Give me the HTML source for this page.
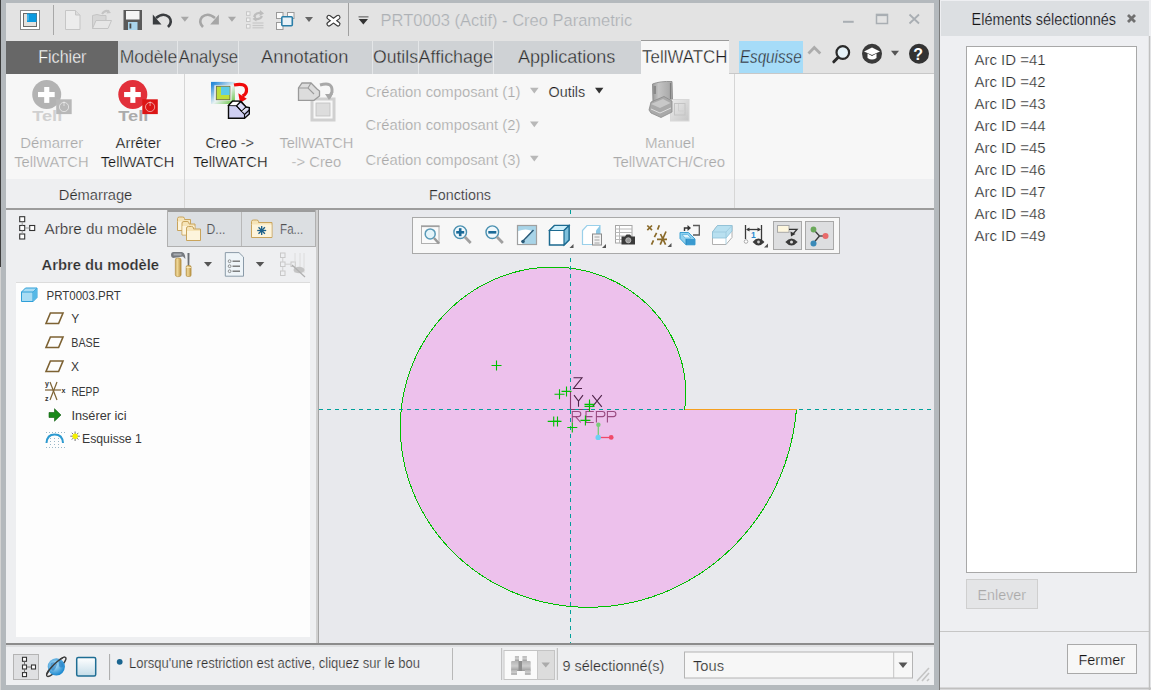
<!DOCTYPE html><html><head><meta charset="utf-8"><style>html,body{margin:0;padding:0;overflow:hidden;background:#b4b9bd}svg{display:block;font-family:"Liberation Sans",sans-serif}</style></head><body><svg width="1151" height="690" viewBox="0 0 1151 690"><rect x="0" y="0" width="1151" height="690" fill="#b4b9bd" />
<rect x="0" y="0" width="1" height="267" fill="#3c3c3c" />
<rect x="0" y="267" width="1" height="423" fill="#d2d2d2" />
<rect x="6" y="3" width="928" height="38" fill="#e3e3e3" />
<rect x="6" y="41" width="928" height="33" fill="#cfd2d5" />
<rect x="6" y="41" width="112" height="33" fill="#676767" />
<line x1="177.5" y1="41" x2="177.5" y2="74" stroke="#e4e6e8" stroke-width="1" />
<line x1="238.5" y1="41" x2="238.5" y2="74" stroke="#e4e6e8" stroke-width="1" />
<line x1="372.5" y1="41" x2="372.5" y2="74" stroke="#e4e6e8" stroke-width="1" />
<line x1="418.5" y1="41" x2="418.5" y2="74" stroke="#e4e6e8" stroke-width="1" />
<line x1="493.5" y1="41" x2="493.5" y2="74" stroke="#e4e6e8" stroke-width="1" />
<rect x="729" y="41" width="205" height="33" fill="#e3e3e3" />
<rect x="739" y="41" width="64" height="32" fill="#a6dcf8" />
<line x1="729" y1="73.5" x2="934" y2="73.5" stroke="#c8c8c8" stroke-width="1" />
<rect x="641" y="40" width="88" height="35" fill="#f7f7f7" />
<line x1="641" y1="40.5" x2="729" y2="40.5" stroke="#9a9a9a" stroke-width="1" />
<rect x="6" y="74" width="928" height="105" fill="#f7f7f7" />
<rect x="6" y="179" width="928" height="29" fill="#eeeff1" />
<line x1="184.5" y1="74" x2="184.5" y2="208" stroke="#d6d6d6" stroke-width="1" />
<line x1="734.5" y1="74" x2="734.5" y2="208" stroke="#d6d6d6" stroke-width="1" />
<rect x="6" y="208" width="928" height="2" fill="#9c9c9c" />
<rect x="6" y="210" width="312" height="433" fill="#eeeff1" />
<rect x="167" y="210" width="150" height="37" fill="#dcdfe2" />
<rect x="167" y="210" width="150" height="2" fill="#9c9c9c" />
<line x1="167.5" y1="210" x2="167.5" y2="247" stroke="#b0b0b0" stroke-width="1" />
<line x1="241.5" y1="212" x2="241.5" y2="247" stroke="#b8b8b8" stroke-width="1" />
<line x1="315.5" y1="210" x2="315.5" y2="247" stroke="#b0b0b0" stroke-width="1" />
<line x1="167" y1="246.5" x2="316" y2="246.5" stroke="#b0b0b0" stroke-width="1" />
<rect x="16" y="282" width="294" height="355" fill="#fdfdfd" />
<line x1="16" y1="282.5" x2="310" y2="282.5" stroke="#dcdcdc" stroke-width="1" />
<rect x="316" y="210" width="2" height="433" fill="#d0d0d0" />
<rect x="318" y="210" width="1" height="433" fill="#a4a4a4" />
<rect x="319" y="210" width="615" height="433" fill="#e8e9ed" />
<rect x="6" y="643" width="928" height="2" fill="#8c8c8c" />
<rect x="6" y="645" width="928" height="40" fill="#eeeff1" />
<rect x="6" y="645" width="928" height="2" fill="#dedfe1" />
<rect x="939" y="0" width="1" height="690" fill="#7c7c7c" />
<rect x="940" y="0" width="211" height="690" fill="#eeeff2" />
<rect x="941" y="1" width="208" height="35" fill="#dcdfe2" />
<rect x="966.5" y="46.5" width="170" height="526" fill="#ffffff" stroke="#a8a8a8" stroke-width="1"/>
<path d="M684.6,409.3 L684.88,406.99 L685.11,404.97 L685.30,402.94 L685.46,400.90 L685.58,398.86 L685.67,396.81 L685.72,394.75 L685.73,392.69 L685.71,390.62 L685.65,388.55 L685.55,386.48 L685.42,384.40 L685.24,382.32 L685.04,380.23 L684.79,378.15 L684.51,376.07 L684.19,373.99 L683.83,371.90 L683.43,369.82 L683.00,367.75 L682.53,365.67 L682.02,363.60 L681.47,361.54 L680.89,359.48 L680.26,357.42 L679.60,355.37 L678.90,353.33 L678.17,351.30 L677.39,349.27 L676.58,347.26 L675.73,345.25 L674.84,343.26 L673.92,341.28 L672.96,339.30 L671.96,337.35 L670.93,335.40 L669.86,333.47 L668.75,331.56 L667.60,329.66 L666.42,327.77 L665.21,325.91 L663.95,324.06 L662.67,322.23 L661.34,320.41 L659.98,318.62 L658.59,316.85 L657.16,315.10 L655.70,313.37 L654.21,311.66 L652.68,309.98 L651.12,308.32 L649.53,306.68 L647.90,305.07 L646.24,303.48 L644.55,301.92 L642.83,300.39 L641.08,298.88 L639.30,297.40 L637.48,295.95 L635.64,294.53 L633.77,293.14 L631.87,291.78 L629.95,290.45 L627.99,289.15 L626.01,287.89 L624.00,286.65 L621.97,285.45 L619.91,284.29 L617.82,283.15 L615.72,282.05 L613.58,280.99 L611.43,279.96 L609.25,278.97 L607.05,278.02 L604.83,277.10 L602.59,276.22 L600.32,275.38 L598.04,274.57 L595.74,273.81 L593.42,273.08 L591.08,272.40 L588.73,271.75 L586.36,271.15 L583.98,270.58 L581.58,270.06 L579.16,269.58 L576.74,269.13 L574.30,268.74 L571.85,268.38 L569.38,268.07 L566.91,267.80 L564.43,267.57 L561.94,267.39 L559.44,267.25 L556.93,267.15 L554.42,267.10 L551.90,267.09 L549.37,267.13 L546.84,267.22 L544.31,267.34 L541.78,267.52 L539.24,267.73 L536.70,268.00 L534.16,268.31 L531.63,268.66 L529.09,269.06 L526.56,269.51 L524.03,270.00 L521.50,270.53 L518.98,271.12 L516.46,271.75 L513.95,272.42 L511.45,273.14 L508.95,273.91 L506.47,274.72 L503.99,275.58 L501.53,276.48 L499.07,277.43 L496.63,278.42 L494.20,279.46 L491.78,280.54 L489.38,281.67 L487.00,282.84 L484.63,284.06 L482.28,285.32 L479.94,286.63 L477.63,287.98 L475.33,289.37 L473.06,290.81 L470.80,292.29 L468.57,293.81 L466.36,295.37 L464.17,296.98 L462.01,298.62 L459.88,300.31 L457.77,302.04 L455.68,303.81 L453.63,305.62 L451.60,307.47 L449.60,309.36 L447.63,311.29 L445.70,313.26 L443.79,315.26 L441.92,317.30 L440.07,319.38 L438.27,321.50 L436.49,323.65 L434.75,325.84 L433.05,328.06 L431.38,330.31 L429.75,332.60 L428.16,334.92 L426.60,337.27 L425.09,339.66 L423.61,342.08 L422.18,344.52 L420.78,347.00 L419.43,349.51 L418.12,352.04 L416.85,354.60 L415.62,357.19 L414.44,359.81 L413.30,362.45 L412.21,365.11 L411.16,367.80 L410.16,370.51 L409.20,373.25 L408.29,376.01 L407.43,378.78 L406.61,381.58 L405.85,384.40 L405.13,387.23 L404.46,390.09 L403.84,392.96 L403.27,395.84 L402.75,398.74 L402.28,401.66 L401.86,404.58 L401.49,407.53 L401.18,410.48 L400.91,413.44 L400.70,416.41 L400.54,419.39 L400.43,422.38 L400.38,425.38 L400.38,428.38 L400.43,431.39 L400.53,434.40 L400.69,437.41 L400.90,440.43 L401.16,443.45 L401.48,446.47 L401.86,449.48 L402.28,452.50 L402.76,455.51 L403.30,458.52 L403.89,461.53 L404.53,464.53 L405.23,467.52 L405.98,470.51 L406.78,473.49 L407.64,476.46 L408.56,479.42 L409.52,482.36 L410.55,485.30 L411.62,488.22 L412.75,491.13 L413.93,494.02 L415.16,496.90 L416.45,499.75 L417.79,502.60 L419.18,505.42 L420.63,508.22 L422.12,511.00 L423.67,513.76 L425.27,516.49 L426.92,519.20 L428.62,521.89 L430.37,524.55 L432.17,527.19 L434.02,529.79 L435.92,532.37 L437.87,534.92 L439.86,537.44 L441.91,539.93 L444.00,542.38 L446.14,544.80 L448.32,547.19 L450.55,549.54 L452.82,551.86 L455.14,554.14 L457.51,556.38 L459.91,558.59 L462.36,560.75 L464.85,562.88 L467.38,564.96 L469.96,567.01 L472.57,569.01 L475.22,570.97 L477.92,572.88 L480.65,574.75 L483.41,576.57 L486.22,578.35 L489.05,580.08 L491.93,581.77 L494.84,583.40 L497.78,584.99 L500.75,586.53 L503.76,588.01 L506.79,589.45 L509.86,590.83 L512.96,592.17 L516.08,593.44 L519.23,594.67 L522.41,595.84 L525.61,596.96 L528.84,598.02 L532.09,599.03 L535.37,599.98 L538.66,600.88 L541.98,601.72 L545.31,602.50 L548.67,603.22 L552.04,603.89 L555.43,604.49 L558.84,605.04 L562.26,605.53 L565.69,605.96 L569.14,606.32 L572.59,606.63 L576.06,606.88 L579.54,607.07 L583.03,607.19 L586.52,607.25 L590.02,607.26 L593.52,607.20 L597.03,607.07 L600.54,606.89 L604.06,606.64 L607.57,606.34 L611.09,605.96 L614.60,605.53 L618.11,605.03 L621.61,604.47 L625.12,603.85 L628.61,603.17 L632.10,602.42 L635.58,601.61 L639.05,600.74 L642.51,599.80 L645.96,598.80 L649.39,597.74 L652.81,596.62 L656.22,595.44 L659.61,594.19 L662.98,592.88 L666.34,591.51 L669.67,590.08 L672.99,588.59 L676.28,587.04 L679.55,585.43 L682.80,583.75 L686.02,582.02 L689.22,580.23 L692.38,578.38 L695.52,576.47 L698.63,574.50 L701.71,572.48 L704.76,570.40 L707.78,568.26 L710.76,566.07 L713.71,563.81 L716.62,561.51 L719.49,559.15 L722.33,556.74 L725.13,554.27 L727.89,551.75 L730.61,549.18 L733.28,546.55 L735.92,543.88 L738.51,541.15 L741.05,538.38 L743.55,535.56 L746.00,532.69 L748.41,529.77 L750.77,526.80 L753.07,523.79 L755.33,520.74 L757.54,517.64 L759.69,514.50 L761.80,511.32 L763.85,508.09 L765.84,504.82 L767.78,501.52 L769.66,498.18 L771.49,494.79 L773.26,491.38 L774.97,487.92 L776.63,484.43 L778.22,480.91 L779.76,477.36 L781.23,473.77 L782.64,470.15 L783.99,466.51 L785.28,462.83 L786.50,459.13 L787.66,455.40 L788.76,451.64 L789.79,447.86 L790.75,444.06 L791.65,440.24 L792.49,436.39 L793.25,432.53 L793.95,428.65 L794.58,424.75 L795.15,420.83 L795.64,416.90 L796.07,412.96 L796.5,409.3 Z" fill="#edc1ec"/>
<path d="M684.6,409.3 L684.88,406.99 L685.11,404.97 L685.30,402.94 L685.46,400.90 L685.58,398.86 L685.67,396.81 L685.72,394.75 L685.73,392.69 L685.71,390.62 L685.65,388.55 L685.55,386.48 L685.42,384.40 L685.24,382.32 L685.04,380.23 L684.79,378.15 L684.51,376.07 L684.19,373.99 L683.83,371.90 L683.43,369.82 L683.00,367.75 L682.53,365.67 L682.02,363.60 L681.47,361.54 L680.89,359.48 L680.26,357.42 L679.60,355.37 L678.90,353.33 L678.17,351.30 L677.39,349.27 L676.58,347.26 L675.73,345.25 L674.84,343.26 L673.92,341.28 L672.96,339.30 L671.96,337.35 L670.93,335.40 L669.86,333.47 L668.75,331.56 L667.60,329.66 L666.42,327.77 L665.21,325.91 L663.95,324.06 L662.67,322.23 L661.34,320.41 L659.98,318.62 L658.59,316.85 L657.16,315.10 L655.70,313.37 L654.21,311.66 L652.68,309.98 L651.12,308.32 L649.53,306.68 L647.90,305.07 L646.24,303.48 L644.55,301.92 L642.83,300.39 L641.08,298.88 L639.30,297.40 L637.48,295.95 L635.64,294.53 L633.77,293.14 L631.87,291.78 L629.95,290.45 L627.99,289.15 L626.01,287.89 L624.00,286.65 L621.97,285.45 L619.91,284.29 L617.82,283.15 L615.72,282.05 L613.58,280.99 L611.43,279.96 L609.25,278.97 L607.05,278.02 L604.83,277.10 L602.59,276.22 L600.32,275.38 L598.04,274.57 L595.74,273.81 L593.42,273.08 L591.08,272.40 L588.73,271.75 L586.36,271.15 L583.98,270.58 L581.58,270.06 L579.16,269.58 L576.74,269.13 L574.30,268.74 L571.85,268.38 L569.38,268.07 L566.91,267.80 L564.43,267.57 L561.94,267.39 L559.44,267.25 L556.93,267.15 L554.42,267.10 L551.90,267.09 L549.37,267.13 L546.84,267.22 L544.31,267.34 L541.78,267.52 L539.24,267.73 L536.70,268.00 L534.16,268.31 L531.63,268.66 L529.09,269.06 L526.56,269.51 L524.03,270.00 L521.50,270.53 L518.98,271.12 L516.46,271.75 L513.95,272.42 L511.45,273.14 L508.95,273.91 L506.47,274.72 L503.99,275.58 L501.53,276.48 L499.07,277.43 L496.63,278.42 L494.20,279.46 L491.78,280.54 L489.38,281.67 L487.00,282.84 L484.63,284.06 L482.28,285.32 L479.94,286.63 L477.63,287.98 L475.33,289.37 L473.06,290.81 L470.80,292.29 L468.57,293.81 L466.36,295.37 L464.17,296.98 L462.01,298.62 L459.88,300.31 L457.77,302.04 L455.68,303.81 L453.63,305.62 L451.60,307.47 L449.60,309.36 L447.63,311.29 L445.70,313.26 L443.79,315.26 L441.92,317.30 L440.07,319.38 L438.27,321.50 L436.49,323.65 L434.75,325.84 L433.05,328.06 L431.38,330.31 L429.75,332.60 L428.16,334.92 L426.60,337.27 L425.09,339.66 L423.61,342.08 L422.18,344.52 L420.78,347.00 L419.43,349.51 L418.12,352.04 L416.85,354.60 L415.62,357.19 L414.44,359.81 L413.30,362.45 L412.21,365.11 L411.16,367.80 L410.16,370.51 L409.20,373.25 L408.29,376.01 L407.43,378.78 L406.61,381.58 L405.85,384.40 L405.13,387.23 L404.46,390.09 L403.84,392.96 L403.27,395.84 L402.75,398.74 L402.28,401.66 L401.86,404.58 L401.49,407.53 L401.18,410.48 L400.91,413.44 L400.70,416.41 L400.54,419.39 L400.43,422.38 L400.38,425.38 L400.38,428.38 L400.43,431.39 L400.53,434.40 L400.69,437.41 L400.90,440.43 L401.16,443.45 L401.48,446.47 L401.86,449.48 L402.28,452.50 L402.76,455.51 L403.30,458.52 L403.89,461.53 L404.53,464.53 L405.23,467.52 L405.98,470.51 L406.78,473.49 L407.64,476.46 L408.56,479.42 L409.52,482.36 L410.55,485.30 L411.62,488.22 L412.75,491.13 L413.93,494.02 L415.16,496.90 L416.45,499.75 L417.79,502.60 L419.18,505.42 L420.63,508.22 L422.12,511.00 L423.67,513.76 L425.27,516.49 L426.92,519.20 L428.62,521.89 L430.37,524.55 L432.17,527.19 L434.02,529.79 L435.92,532.37 L437.87,534.92 L439.86,537.44 L441.91,539.93 L444.00,542.38 L446.14,544.80 L448.32,547.19 L450.55,549.54 L452.82,551.86 L455.14,554.14 L457.51,556.38 L459.91,558.59 L462.36,560.75 L464.85,562.88 L467.38,564.96 L469.96,567.01 L472.57,569.01 L475.22,570.97 L477.92,572.88 L480.65,574.75 L483.41,576.57 L486.22,578.35 L489.05,580.08 L491.93,581.77 L494.84,583.40 L497.78,584.99 L500.75,586.53 L503.76,588.01 L506.79,589.45 L509.86,590.83 L512.96,592.17 L516.08,593.44 L519.23,594.67 L522.41,595.84 L525.61,596.96 L528.84,598.02 L532.09,599.03 L535.37,599.98 L538.66,600.88 L541.98,601.72 L545.31,602.50 L548.67,603.22 L552.04,603.89 L555.43,604.49 L558.84,605.04 L562.26,605.53 L565.69,605.96 L569.14,606.32 L572.59,606.63 L576.06,606.88 L579.54,607.07 L583.03,607.19 L586.52,607.25 L590.02,607.26 L593.52,607.20 L597.03,607.07 L600.54,606.89 L604.06,606.64 L607.57,606.34 L611.09,605.96 L614.60,605.53 L618.11,605.03 L621.61,604.47 L625.12,603.85 L628.61,603.17 L632.10,602.42 L635.58,601.61 L639.05,600.74 L642.51,599.80 L645.96,598.80 L649.39,597.74 L652.81,596.62 L656.22,595.44 L659.61,594.19 L662.98,592.88 L666.34,591.51 L669.67,590.08 L672.99,588.59 L676.28,587.04 L679.55,585.43 L682.80,583.75 L686.02,582.02 L689.22,580.23 L692.38,578.38 L695.52,576.47 L698.63,574.50 L701.71,572.48 L704.76,570.40 L707.78,568.26 L710.76,566.07 L713.71,563.81 L716.62,561.51 L719.49,559.15 L722.33,556.74 L725.13,554.27 L727.89,551.75 L730.61,549.18 L733.28,546.55 L735.92,543.88 L738.51,541.15 L741.05,538.38 L743.55,535.56 L746.00,532.69 L748.41,529.77 L750.77,526.80 L753.07,523.79 L755.33,520.74 L757.54,517.64 L759.69,514.50 L761.80,511.32 L763.85,508.09 L765.84,504.82 L767.78,501.52 L769.66,498.18 L771.49,494.79 L773.26,491.38 L774.97,487.92 L776.63,484.43 L778.22,480.91 L779.76,477.36 L781.23,473.77 L782.64,470.15 L783.99,466.51 L785.28,462.83 L786.50,459.13 L787.66,455.40 L788.76,451.64 L789.79,447.86 L790.75,444.06 L791.65,440.24 L792.49,436.39 L793.25,432.53 L793.95,428.65 L794.58,424.75 L795.15,420.83 L795.64,416.90 L796.07,412.96 L796.5,409.3 Z" fill="none" stroke="#00c000" stroke-width="1" shape-rendering="crispEdges"/>
<rect x="20.5" y="10.5" width="19" height="19" fill="#ffffff" stroke="#8a8a8a" stroke-width="1"/>
<rect x="23.5" y="13.5" width="13" height="13" fill="#e4e2de" stroke="#6a6a6a" stroke-width="1"/>
<rect x="27" y="13.5" width="9.5" height="8.5" fill="#0a9ae0" />
<line x1="28" y1="14.5" x2="28" y2="20.5" stroke="#9fd8f4" stroke-width="0.8" />
<line x1="53.5" y1="5" x2="53.5" y2="35" stroke="#a8a8a8" stroke-width="1" />
<path d="M65.5,10.5 L75.5,10.5 L80,15 L80,29.5 L65.5,29.5 Z" fill="#ececec" stroke="#c6c6c6" stroke-width="1"/>
<path d="M75.5,10.5 L75.5,15 L80,15" fill="#dcdcdc" stroke="#c6c6c6" stroke-width="1"/>
<path d="M92.5,28.5 L92.5,15.5 L97,14.5 L101,15.5 L106,15.5 L106,20 Z" fill="#d6d6d6" stroke="#c4c4c4" stroke-width="1"/>
<path d="M92.5,28.5 L96,20.5 L111.5,20.5 L108,28.5 Z" fill="#e6e6e6" stroke="#c4c4c4" stroke-width="1"/>
<path d="M102,14 Q105,9.5 109,11.5" fill="none" stroke="#c4c4c4" stroke-width="2"/><path d="M108,9.5 L111,13 L106.5,13.5 Z" fill="#c4c4c4"/>
<rect x="123.5" y="10" width="18.5" height="20" fill="#5a5a5a" />
<rect x="126" y="11" width="13.5" height="8.5" fill="#f4f4f4" />
<rect x="128" y="22" width="9.5" height="8" fill="#a9d4ec" />
<rect x="129.5" y="23.5" width="1.8" height="5" fill="#4a4a4a" />
<path d="M156,18 Q163,12 169,17 Q173,22 168,27" fill="none" stroke="#3a3d40" stroke-width="2.6"/>
<path d="M152.8,14.5 L152.8,24.5 L161.5,24.5 Z" fill="#3a3d40"/>
<path d="M180.8,16.7 L188.9,16.7 L184.85,21.8 Z" fill="#a8a8a8"/>
<path d="M215,18 Q208,12 202,17 Q198,22 203,27" fill="none" stroke="#a6a6a6" stroke-width="2.6"/>
<path d="M218.9,14.5 L218.9,24.5 L210.2,24.5 Z" fill="#a6a6a6"/>
<path d="M227.9,16.7 L236,16.7 L231.95,21.8 Z" fill="#a8a8a8"/>
<rect x="246.5" y="11.8" width="3.5" height="3.5" fill="#f2f2f2" stroke="#c4c4c4" stroke-width="0.9"/>
<rect x="246.5" y="18" width="3.5" height="3.5" fill="#f2f2f2" stroke="#c4c4c4" stroke-width="0.9"/>
<rect x="246.5" y="24.6" width="3.5" height="3.5" fill="#f2f2f2" stroke="#c4c4c4" stroke-width="0.9"/>
<line x1="252.5" y1="23" x2="263.5" y2="23" stroke="#c8c8c8" stroke-width="1.2" />
<line x1="252.5" y1="25.5" x2="263.5" y2="25.5" stroke="#c8c8c8" stroke-width="1.2" />
<line x1="252.5" y1="27.8" x2="263.5" y2="27.8" stroke="#c8c8c8" stroke-width="1.2" />
<path d="M254,17 Q256,12 261,13" fill="none" stroke="#bdbdbd" stroke-width="2.2"/><path d="M260,10 L264,13.5 L259.5,16 Z" fill="#bdbdbd"/>
<path d="M262,16 Q260,20 255,19" fill="none" stroke="#bdbdbd" stroke-width="2.2"/><path d="M256,16 L252.5,19 L256.5,21.5 Z" fill="#bdbdbd"/>
<rect x="276.5" y="12.5" width="6.5" height="6" fill="#fafafa" stroke="#9a9a9a" stroke-width="1"/>
<rect x="287.5" y="12.5" width="6.5" height="6" fill="#fafafa" stroke="#9a9a9a" stroke-width="1"/>
<rect x="276.5" y="22.5" width="6.5" height="7" fill="#fafafa" stroke="#9a9a9a" stroke-width="1"/>
<rect x="281.8" y="16.8" width="10.5" height="9" fill="#e8f2f8" stroke="#2a7ea8" stroke-width="1.6" rx="1"/>
<path d="M305,17 L313,17 L309,22 Z" fill="#666"/>
<path d="M329,17.3 L338,24 M338,17.3 L329,24" stroke="#3a3a3a" stroke-width="5" stroke-linecap="round"/>
<path d="M329,17.3 L338,24 M338,17.3 L329,24" stroke="#ffffff" stroke-width="2.8" stroke-linecap="round"/>
<line x1="348.5" y1="3" x2="348.5" y2="36" stroke="#a0a0a0" stroke-width="1" />
<rect x="358.5" y="16" width="10" height="1.6" fill="#8a8a8a" />
<path d="M358.7,19 L368,19 L363.35,24.5 Z" fill="#333"/>
<rect x="843" y="20.8" width="10.7" height="2" fill="#a9aeb3" />
<rect x="876.5" y="14.5" width="11" height="9" fill="none" stroke="#a9aeb3" stroke-width="1.5"/>
<rect x="876" y="13.9" width="12" height="2.2" fill="#a9aeb3" />
<path d="M909.5,14.5 L919,23.5 M919,14.5 L909.5,23.5" stroke="#a9aeb3" stroke-width="1.8"/>
<path d="M808.5,53.5 L814.3,47.5 L820.3,53.5" fill="none" stroke="#acacac" stroke-width="2.8"/>
<circle cx="842.8" cy="52.5" r="6.3" fill="#e6f2f8" stroke="#2a2a2a" stroke-width="2.2"/>
<line x1="838" y1="57.5" x2="833.8" y2="61.8" stroke="#2a2a2a" stroke-width="3" stroke-linecap="round"/>
<circle cx="872" cy="53.8" r="10" fill="#3a3a3a"/>
<path d="M864,51.5 L872,47.5 L880,51.5 L872,55 Z" fill="#ffffff"/><path d="M867.5,53.5 L867.5,58 Q872,61 876.5,58 L876.5,53.5 L872,56 Z" fill="#ffffff"/>
<path d="M891,50.7 L899,50.7 L895,55.8 Z" fill="#555"/>
<circle cx="919" cy="53.8" r="10" fill="#333"/>
<text x="913.3" y="60" font-size="16" font-weight="bold" fill="#ffffff">?</text>
<text x="32.2" y="120.5" font-size="14" font-weight="bold" fill="#d0d0d0" textLength="30" lengthAdjust="spacingAndGlyphs">Tell</text>
<circle cx="46.7" cy="94.6" r="14.5" fill="#b3b3b3"/>
<rect x="38.0" y="92" width="16.7" height="5.1" fill="#ffffff" />
<rect x="44.2" y="87" width="5.1" height="15.9" fill="#ffffff" />
<rect x="56.2" y="99.3" width="15.5" height="14.8" fill="#b8b8b8" />
<circle cx="64.0" cy="107" r="4.6" fill="none" stroke="rgba(255,255,255,0.55)" stroke-width="1"/>
<line x1="64.0" y1="101.5" x2="64.0" y2="106" stroke="rgba(255,255,255,0.55)" stroke-width="1" />
<text x="118.30000000000001" y="120.5" font-size="14" font-weight="bold" fill="#ababab" textLength="30" lengthAdjust="spacingAndGlyphs">Tell</text>
<circle cx="132.8" cy="94.6" r="14.5" fill="#e2303a"/>
<rect x="124.10000000000001" y="92" width="16.7" height="5.1" fill="#ffffff" />
<rect x="130.3" y="87" width="5.1" height="15.9" fill="#ffffff" />
<rect x="142.3" y="99.3" width="15.5" height="14.8" fill="#dc1616" />
<circle cx="150.10000000000002" cy="107" r="4.6" fill="none" stroke="rgba(255,255,255,0.55)" stroke-width="1"/>
<line x1="150.10000000000002" y1="101.5" x2="150.10000000000002" y2="106" stroke="rgba(255,255,255,0.55)" stroke-width="1" />
<defs><linearGradient id="gb" x1="0" y1="0" x2="1" y2="1"><stop offset="0" stop-color="#2a8ad8"/><stop offset="0.55" stop-color="#e8f2f2"/><stop offset="1" stop-color="#70c850"/></linearGradient></defs>
<rect x="212.7" y="83.6" width="20.5" height="18.7" fill="none" stroke="url(#gb)" stroke-width="3.4"/>
<rect x="216.3" y="86.3" width="13.6" height="13.4" fill="#bede3a" stroke="#6a6a40" stroke-width="0.9"/>
<rect x="221" y="86.8" width="8.6" height="8.2" fill="#5ccce6" />
<path d="M234,85 Q245.5,82.5 246.5,89 Q247,94 242.5,96" fill="none" stroke="#f00a0a" stroke-width="3.2"/><path d="M238.3,93.2 L246.8,98.8 L240,103 Z" fill="#f00a0a"/>
<path d="M228.5,118.3 L228.5,105.5 L232.5,101.3 L238.5,101.3 L241.5,102 L246,107 L249.3,107.5 L249.3,114 L244.5,118.3 Z" fill="#cfcff2" stroke="#0a0a0a" stroke-width="1.4"/>
<path d="M228.5,105.5 L232.5,101.3 L240.5,101.3 L236.5,105.8 Z" fill="#ffffff" stroke="#0a0a0a" stroke-width="1.1"/>
<path d="M236.5,105.8 L240.7,101.8 L246,107 L241.5,111.3 Z" fill="#dcdcf8" stroke="#0a0a0a" stroke-width="1.1"/>
<path d="M236.5,105.8 L244.5,114.5 L244.5,118.3 M244.5,114.5 L249.3,110" fill="none" stroke="#0a0a0a" stroke-width="1.1"/>
<line x1="242.5" y1="111.5" x2="247.5" y2="108.3" stroke="#e8e8e8" stroke-width="1.3" />
<rect x="312" y="99" width="22" height="21" fill="none" stroke="#d0d0d0" stroke-width="3"/>
<rect x="316" y="103" width="14" height="13" fill="#dddddd" stroke="#c0c0c0" stroke-width="0.8"/>
<path d="M298.5,100.3 L298.5,88 L302,83 L311,83 L317,89 L319.5,91 L319.5,96 L314,100.3 Z" fill="#dcdcdc" stroke="#9a9a9a" stroke-width="1.3"/>
<path d="M298.5,88 L308,88 L314,94 M308,88 L311,83" fill="none" stroke="#9a9a9a" stroke-width="1.1"/>
<path d="M320,85 Q333,81 332,92 L329,98" fill="none" stroke="#a8a8a8" stroke-width="3"/><path d="M325,94 L329,100 L333,94 Z" fill="#a8a8a8"/>
<defs><linearGradient id="mg" x1="0" y1="0" x2="1" y2="1"><stop offset="0" stop-color="#ececec"/><stop offset="1" stop-color="#c6c6c6"/></linearGradient><linearGradient id="bk" x1="0" y1="0" x2="1" y2="0"><stop offset="0" stop-color="#9a9a9a"/><stop offset="0.3" stop-color="#c4c4c4"/><stop offset="1" stop-color="#a4a4a4"/></linearGradient></defs>
<rect x="670.5" y="99.5" width="18.5" height="21.5" fill="url(#mg)" stroke="#d8d8d8" stroke-width="1"/>
<rect x="674.5" y="103.5" width="10.5" height="11.5" fill="none" stroke="#c4c4c4" stroke-width="1"/>
<line x1="678.5" y1="104" x2="678.5" y2="111" stroke="#cfcfcf" stroke-width="1" />
<line x1="678.5" y1="111" x2="685" y2="111" stroke="#cfcfcf" stroke-width="1" />
<path d="M652.5,84 Q660,81 672,81.5 L672.5,99 Q662,98 653,103 Z" fill="url(#bk)" stroke="#8e8e8e" stroke-width="0.9"/>
<rect x="653.5" y="86" width="2.5" height="8" fill="#8a8a8a" />
<line x1="670.5" y1="83" x2="670.5" y2="99" stroke="#7e7e7e" stroke-width="1.2" />
<path d="M649,110 L651,102 L664,96.5 L672,101 L672,112 L661,117.5 L651,113 Z" fill="#a9a9a9" stroke="#8a8a8a" stroke-width="0.8"/>
<path d="M651,104 L663,99 L670.5,103 L660,108 Z" fill="#c8c8c8"/>
<path d="M651,109 L660,113 L671,108" fill="none" stroke="#dedede" stroke-width="1"/>
<rect x="19.7" y="216.7" width="5" height="5" fill="#ffffff" stroke="#333" stroke-width="1.1"/>
<rect x="19.7" y="225.5" width="5" height="5" fill="#ffffff" stroke="#333" stroke-width="1.1"/>
<rect x="19.7" y="234" width="5" height="5" fill="#ffffff" stroke="#333" stroke-width="1.1"/>
<rect x="29.7" y="225.5" width="5" height="5" fill="#ffffff" stroke="#333" stroke-width="1.1"/>
<line x1="22.2" y1="221.7" x2="22.2" y2="225.5" stroke="#999" stroke-width="1" />
<line x1="22.2" y1="230.5" x2="22.2" y2="234" stroke="#999" stroke-width="1" />
<line x1="24.7" y1="228" x2="29.7" y2="228" stroke="#999" stroke-width="1" />
<path d="M177.5,221.5 L177.5,218.5 Q177.5,217.0 179.5,217.0 L182.5,217.0 Q184.5,217.0 184.5,218.5 L184.5,219.5 L190.5,219.5 L190.5,230.5 L177.5,230.5 Z" fill="#f6e4b8" stroke="#c9a45c" stroke-width="1"/>
<rect x="178.0" y="221.5" width="12" height="8.5" fill="#fdf4dc"/>
<path d="M182,226 L182,223 Q182,221.5 184,221.5 L187,221.5 Q189,221.5 189,223 L189,224 L195,224 L195,235 L182,235 Z" fill="#f6e4b8" stroke="#c9a45c" stroke-width="1"/>
<rect x="182.5" y="226" width="12" height="8.5" fill="#fdf4dc"/>
<path d="M186.5,231 L186.5,228 Q186.5,226.5 188.5,226.5 L191.5,226.5 Q193.5,226.5 193.5,228 L193.5,229 L200.5,229 L200.5,240.5 L186.5,240.5 Z" fill="#f6e4b8" stroke="#c9a45c" stroke-width="1"/>
<rect x="187.0" y="231" width="13" height="9.0" fill="#fdf4dc"/>
<path d="M251.5,224.5 L251.5,221.5 Q251.5,220.0 253.5,220.0 L256.5,220.0 Q258.5,220.0 258.5,221.5 L258.5,222.5 L272.0,222.5 L272.0,237.5 L251.5,237.5 Z" fill="#f6e4b8" stroke="#c9a45c" stroke-width="1"/>
<rect x="252.0" y="224.5" width="19.5" height="12.5" fill="#fdf4dc"/>
<g stroke="#1a5f8a" stroke-width="1.3"><line x1="261.7" y1="226" x2="261.7" y2="235"/><line x1="257.2" y1="230.5" x2="266.2" y2="230.5"/><line x1="258.5" y1="227.3" x2="264.9" y2="233.7"/><line x1="264.9" y1="227.3" x2="258.5" y2="233.7"/></g><circle cx="261.7" cy="230.5" r="1.8" fill="#1a5f8a"/>
<text x="206.5" y="233.9" font-size="15" fill="#505050" textLength="18.9" lengthAdjust="spacingAndGlyphs" stroke="#dcdfe2" stroke-width="0.22" >D...</text>
<text x="280.1" y="233.9" font-size="15" fill="#505050" textLength="23.1" lengthAdjust="spacingAndGlyphs" stroke="#dcdfe2" stroke-width="0.22" >Fa...</text>
<defs><linearGradient id="hd" x1="0" y1="0" x2="1" y2="0"><stop offset="0" stop-color="#c8a860"/><stop offset="0.35" stop-color="#f0d898"/><stop offset="1" stop-color="#b89040"/></linearGradient></defs>
<rect x="175.3" y="258" width="5.8" height="18.6" rx="2" fill="url(#hd)" stroke="#b08a3a" stroke-width="0.6"/>
<path d="M171,255 Q171,252 173.5,252 L182,252 Q185.5,253 185.3,259 L183,256.5 L178,257.2 L173,258 Q171,257.5 171,255 Z" fill="#767a80"/>
<rect x="173.5" y="253.5" width="8" height="2" fill="#a8acb2" />
<path d="M187.5,253 L189.5,253 L189.3,266 L187.7,266 Z" fill="#6a6e74"/>
<rect x="186.1" y="265.5" width="5" height="11" rx="1.5" fill="url(#hd)" stroke="#b08a3a" stroke-width="0.6"/>
<line x1="186.3" y1="267.5" x2="191" y2="267.5" stroke="#fff0c8" stroke-width="0.8" />
<path d="M204,261.9 L212,261.9 L208,266.7 Z" fill="#555"/>
<path d="M225.3,252.6 L239,252.6 L243.5,257 L243.5,276.2 L225.3,276.2 Z" fill="#eef4f8" stroke="#8a9aa8" stroke-width="1"/>
<circle cx="229.6" cy="261.2" r="1.4" fill="none" stroke="#777" stroke-width="0.8"/>
<line x1="232.5" y1="261.2" x2="240" y2="261.2" stroke="#6a6a6a" stroke-width="1.3" />
<circle cx="229.6" cy="266.2" r="1.4" fill="none" stroke="#777" stroke-width="0.8"/>
<line x1="232.5" y1="266.2" x2="240" y2="266.2" stroke="#6a6a6a" stroke-width="1.3" />
<circle cx="229.6" cy="271.2" r="1.4" fill="none" stroke="#777" stroke-width="0.8"/>
<line x1="232.5" y1="271.2" x2="240" y2="271.2" stroke="#6a6a6a" stroke-width="1.3" />
<path d="M255.8,261.9 L264.3,261.9 L260.05,266.7 Z" fill="#555"/>
<rect x="280.5" y="253" width="4.5" height="4.5" fill="none" stroke="#c8c8c8" stroke-width="1"/>
<rect x="280.5" y="262" width="4.5" height="4.5" fill="none" stroke="#c8c8c8" stroke-width="1"/>
<rect x="280.5" y="271" width="4.5" height="4.5" fill="none" stroke="#c8c8c8" stroke-width="1"/>
<rect x="291" y="262" width="4.5" height="4.5" fill="none" stroke="#c8c8c8" stroke-width="1"/>
<line x1="282.75" y1="257.5" x2="282.75" y2="262" stroke="#cfcfcf" stroke-width="1" />
<line x1="282.75" y1="266.5" x2="282.75" y2="271" stroke="#cfcfcf" stroke-width="1" />
<line x1="285" y1="264.2" x2="291" y2="264.2" stroke="#cfcfcf" stroke-width="1" />
<line x1="295" y1="253" x2="295" y2="273" stroke="#dcdcdc" stroke-width="1" />
<line x1="300" y1="253" x2="300" y2="273" stroke="#dcdcdc" stroke-width="1" />
<line x1="304" y1="253" x2="304" y2="273" stroke="#dcdcdc" stroke-width="1" />
<ellipse cx="299" cy="270" rx="5.5" ry="3.2" fill="#c4c4c4"/>
<line x1="292" y1="265" x2="305" y2="277" stroke="#b0b0b0" stroke-width="1.2" />
<path d="M21.5,292 L25.5,288 L37,288 L37,297.5 L33,301.5 L21.5,301.5 Z" fill="#a8dcf4" stroke="#2f9fd8" stroke-width="1"/>
<path d="M21.5,292 L33,292 L37,288 M33,292 L33,301.5" fill="none" stroke="#2f9fd8" stroke-width="1"/>
<path d="M33,292 L37,288 L37,297.5 L33,301.5 Z" fill="#56b8e6"/>
<text x="46.5" y="299.7" font-size="12" fill="#383838" textLength="74.4" lengthAdjust="spacingAndGlyphs" >PRT0003.PRT</text>
<path d="M46,323.5 L58.6,323.5 L63,313.0 L50.4,313.0 Z" fill="none" stroke="#7d6233" stroke-width="1.6"/>
<path d="M46,347.5 L58.6,347.5 L63,337.0 L50.4,337.0 Z" fill="none" stroke="#7d6233" stroke-width="1.6"/>
<path d="M46,371.5 L58.6,371.5 L63,361.0 L50.4,361.0 Z" fill="none" stroke="#7d6233" stroke-width="1.6"/>
<text x="71.3" y="323.4" font-size="12" fill="#383838" textLength="8" lengthAdjust="spacingAndGlyphs" >Y</text>
<text x="71.3" y="347.4" font-size="12" fill="#383838" textLength="28.5" lengthAdjust="spacingAndGlyphs" >BASE</text>
<text x="71" y="371.4" font-size="12" fill="#383838" textLength="8" lengthAdjust="spacingAndGlyphs" >X</text>
<g stroke="#7d6233" stroke-width="1.2"><line x1="45" y1="390" x2="61" y2="390"/><line x1="50" y1="382" x2="57" y2="400"/><line x1="57" y1="382" x2="50" y2="400"/></g>
<g font-size="7" fill="#333" font-weight="bold"><text x="45" y="386">y</text><text x="45" y="401">z</text><text x="61.5" y="393">x</text></g>
<text x="71.4" y="395.5" font-size="12" fill="#383838" textLength="27.8" lengthAdjust="spacingAndGlyphs" >REPP</text>
<path d="M49,412.5 L54.5,412.5 L54.5,408.7 L61,415 L54.5,421.2 L54.5,417.5 L49,417.5 Z" fill="#1a8a1a" stroke="#0d5a0d" stroke-width="0.6"/>
<text x="71.4" y="419.7" font-size="12" fill="#383838" textLength="55.1" lengthAdjust="spacingAndGlyphs" >Insérer ici</text>
<path d="M46.5,443 Q47,434.5 54.7,434.5 Q62.5,434.5 63,443" fill="none" stroke="#2d9ad0" stroke-width="2"/>
<g fill="#9ab8c8"><rect x="46" y="432" width="1" height="1"/><rect x="46" y="447" width="1" height="1"/><rect x="49" y="432" width="1" height="1"/><rect x="49" y="447" width="1" height="1"/><rect x="52" y="432" width="1" height="1"/><rect x="52" y="447" width="1" height="1"/><rect x="55" y="432" width="1" height="1"/><rect x="55" y="447" width="1" height="1"/><rect x="58" y="432" width="1" height="1"/><rect x="58" y="447" width="1" height="1"/><rect x="61" y="432" width="1" height="1"/><rect x="61" y="447" width="1" height="1"/><rect x="64" y="432" width="1" height="1"/><rect x="64" y="447" width="1" height="1"/><rect x="50" y="438" width="1" height="1"/><rect x="50" y="441" width="1" height="1"/><rect x="50" y="444" width="1" height="1"/><rect x="54" y="438" width="1" height="1"/><rect x="54" y="441" width="1" height="1"/><rect x="54" y="444" width="1" height="1"/><rect x="58" y="438" width="1" height="1"/><rect x="58" y="441" width="1" height="1"/><rect x="58" y="444" width="1" height="1"/></g>
<g stroke="#3a3a3a" stroke-width="0.7"><line x1="75.1" y1="431.5" x2="75.1" y2="441"/><line x1="70.3" y1="436.2" x2="79.9" y2="436.2"/><line x1="71.8" y1="432.8" x2="78.4" y2="439.6"/><line x1="78.4" y1="432.8" x2="71.8" y2="439.6"/></g><circle cx="75.1" cy="436.2" r="2.7" fill="#f4f000"/>
<text x="82" y="443.2" font-size="12" fill="#383838" textLength="59.9" lengthAdjust="spacingAndGlyphs" >Esquisse 1</text>
<line x1="319" y1="409.5" x2="934" y2="409.5" stroke="#00a09a" stroke-width="1" stroke-dasharray="4 4" shape-rendering="crispEdges"/>
<line x1="570.5" y1="210" x2="570.5" y2="643" stroke="#00a09a" stroke-width="1" stroke-dasharray="4 4" shape-rendering="crispEdges"/>
<line x1="685" y1="409.5" x2="796.5" y2="409.5" stroke="#f5a020" stroke-width="1" shape-rendering="crispEdges"/>
<path d="M570.5,391.5 L570.5,409.5 L589.5,409.5" fill="none" stroke="#8a3a70" stroke-width="1.1"/>
<path d="M573.5,377.8 L582,377.8 L573.5,388.5 L582,388.5" fill="none" stroke="#4e2448" stroke-width="1.1"/>
<path d="M574,395.2 L578.5,401 L583,395.2 M578.5,401 L578.5,406.8" fill="none" stroke="#4e2448" stroke-width="1.1"/>
<path d="M592.3,395.2 L601.8,406.8 M601.8,395.2 L592.3,406.8" fill="none" stroke="#4e2448" stroke-width="1.1"/>
<path d="M572.3,422.5 L572.3,411.5 L578.3,411.5 Q580.8,411.5 580.8,414 Q580.8,416.6 578.3,416.6 L572.3,416.6 M575.5,416.6 L580.8,422.5 M593.8,411.5 L586,411.5 L586,422.5 L593.8,422.5 M586,416.6 L592.5,416.6 M596.4,422.5 L596.4,411.5 L602.4,411.5 Q604.9,411.5 604.9,414 Q604.9,416.6 602.4,416.6 L596.4,416.6 M607.4,422.5 L607.4,411.5 L613.4,411.5 Q615.9,411.5 615.9,414 Q615.9,416.6 613.4,416.6 L607.4,416.6" fill="none" stroke="#9a4a80" stroke-width="1.1"/>
<line x1="567" y1="409.5" x2="599" y2="409.5" stroke="#00a09a" stroke-width="1" stroke-dasharray="4 4" shape-rendering="crispEdges"/>
<path d="M491.5,365.5 L501.5,365.5 M496.5,360.5 L496.5,370.5" stroke="#00c000" stroke-width="1.1"/>
<path d="M554.5,394.3 L564.5,394.3 M559.5,389.3 L559.5,399.3" stroke="#00c000" stroke-width="1.1"/>
<path d="M561.5,391.4 L571.5,391.4 M566.5,386.4 L566.5,396.4" stroke="#00c000" stroke-width="1.1"/>
<path d="M584.5,404.4 L594.5,404.4 M589.5,399.4 L589.5,409.4" stroke="#00c000" stroke-width="1.1"/>
<path d="M584.5,406.4 L594.5,406.4 M589.5,401.4 L589.5,411.4" stroke="#00c000" stroke-width="1.1"/>
<path d="M580.4,420.4 L590.4,420.4 M585.4,415.4 L585.4,425.4" stroke="#00c000" stroke-width="1.1"/>
<path d="M547.7,421.4 L559.7,421.4 M553.7,416.4 L553.7,426.4" stroke="#00c000" stroke-width="1.1"/>
<path d="M553.5,421.4 L561.5,421.4 M557.5,416.4 L557.5,426.4" stroke="#00c000" stroke-width="1.1"/>
<path d="M567.3,427.5 L577.3,427.5 M572.3,422.5 L572.3,432.5" stroke="#00c000" stroke-width="1.1"/>
<line x1="598.3" y1="437.5" x2="598.3" y2="425" stroke="#77cc77" stroke-width="1.3" />
<circle cx="598.4" cy="424.7" r="2.2" fill="#77cc77"/>
<line x1="598.3" y1="437.5" x2="611" y2="437.5" stroke="#f04a6a" stroke-width="1.3" />
<circle cx="611.2" cy="437.4" r="2.4" fill="#f04a6a"/>
<circle cx="598.2" cy="437.4" r="2.7" fill="#6cd0f4"/>
<rect x="412.5" y="217.5" width="427" height="36" fill="#f7f7f7" stroke="#a9a9a9" stroke-width="1"/>
<rect x="773.5" y="221.5" width="28" height="28" fill="#dddee0" stroke="#a8a8a8" stroke-width="1"/>
<rect x="805.5" y="221.5" width="28" height="28" fill="#dddee0" stroke="#a8a8a8" stroke-width="1"/>
<rect x="421.5" y="226" width="17.5" height="17.5" fill="#fafafa" stroke="#b0b0b0" stroke-width="1"/>
<line x1="421" y1="226.3" x2="439.5" y2="226.3" stroke="#a0a0a0" stroke-width="1.6" />
<circle cx="430.2" cy="233.9" r="5" fill="#e4f4fa" stroke="#5a9ab8" stroke-width="1.5"/>
<line x1="434" y1="238" x2="439" y2="243.5" stroke="#9a9a9a" stroke-width="2.6" />
<circle cx="460.2" cy="232.2" r="6.3" fill="#f0f8fc" stroke="#4a90b0" stroke-width="1.4"/>
<line x1="464.7" y1="236.8" x2="470.7" y2="243" stroke="#a0a0a0" stroke-width="2.8" />
<rect x="456.2" y="231" width="8" height="2.6" fill="#1a6a98" />
<rect x="458.9" y="228.2" width="2.6" height="8" fill="#1a6a98" />
<circle cx="492.3" cy="232.2" r="6.3" fill="#f0f8fc" stroke="#4a90b0" stroke-width="1.4"/>
<line x1="496.8" y1="236.8" x2="502.8" y2="243" stroke="#a0a0a0" stroke-width="2.8" />
<rect x="488.3" y="231" width="8" height="2.6" fill="#1a6a98" />
<rect x="517.5" y="225.5" width="19" height="19" fill="#a8d4e8" stroke="#a0a0a0" stroke-width="1.2"/>
<path d="M518.2,244 L518.2,231 Q526,228 532,231 L522,244 Z" fill="#ffffff"/>
<line x1="522" y1="242" x2="533.5" y2="230" stroke="#2a5a78" stroke-width="1.5" />
<circle cx="523" cy="241.5" r="1.8" fill="#2a5a78"/>
<path d="M549.5,230.5 L554.5,225.5 L569,225.5 L569,240 L564,245 L549.5,245 Z" fill="#ffffff" stroke="#1c6a90" stroke-width="1.5"/>
<path d="M549.5,230.5 L554.5,225.5 L569,225.5 L564,230.5 Z" fill="#cdeefa" stroke="#1c6a90" stroke-width="1.2"/>
<path d="M564,230.5 L569,225.5 L569,240 L564,245 Z" fill="#7ec0dc" stroke="#1c6a90" stroke-width="1.2"/>
<path d="M573.5,248 L573.5,244 L569.5,248 Z" fill="#555"/>
<path d="M582.5,230.5 L587,225.5 L600,225.5 L600,240 L596,244.5 L582.5,244.5 Z" fill="#ffffff" stroke="#9ad0ea" stroke-width="1.2"/>
<path d="M596,230.5 L600,225.5 L600,240 L596,244.5 Z" fill="#8cc8e6"/>
<rect x="592.5" y="234" width="9" height="11" fill="#f2f2f2" stroke="#8a8a8a" stroke-width="1"/>
<line x1="594.5" y1="237" x2="599.5" y2="237" stroke="#9a9a9a" stroke-width="0.9" />
<line x1="594.5" y1="240" x2="599.5" y2="240" stroke="#9a9a9a" stroke-width="0.9" />
<line x1="594.5" y1="243" x2="599.5" y2="243" stroke="#9a9a9a" stroke-width="0.9" />
<path d="M606,248 L606,244 L602,248 Z" fill="#555"/>
<rect x="615.5" y="225.5" width="16.5" height="17.5" fill="#ffffff" stroke="#a6a6a6" stroke-width="1"/>
<line x1="615.5" y1="229" x2="632" y2="229" stroke="#b8b8b8" stroke-width="1" />
<line x1="615.5" y1="232.5" x2="632" y2="232.5" stroke="#b8b8b8" stroke-width="1" />
<line x1="615.5" y1="236" x2="632" y2="236" stroke="#b8b8b8" stroke-width="1" />
<line x1="615.5" y1="239.5" x2="632" y2="239.5" stroke="#b8b8b8" stroke-width="1" />
<line x1="619.5" y1="225.5" x2="619.5" y2="243" stroke="#b8b8b8" stroke-width="1" />
<path d="M621.5,236.5 L625,236.5 L626.5,234.5 L630,234.5 L631.5,236.5 L635,236.5 L635,244.5 L621.5,244.5 Z" fill="#3a3a3a"/>
<circle cx="628.3" cy="240.3" r="2.6" fill="#9a9a9a" stroke="#ddd" stroke-width="0.6"/>
<g stroke="#8a6a2a" stroke-width="1.7"><path d="M647.3,225.5 L652,230.2 M652,225.5 L647.3,230.2"/><path d="M659.3,225.2 L657.6,229.6 M656.6,232.8 L654.4,237.2 M653.5,240.3 L651.5,244.7"/><path d="M666,231.5 L660.2,244.6 M660.5,234 L665.6,244.6 M657,239.3 L667,239.3"/></g>
<path d="M671.5,247 L671.5,243 L667.5,247 Z" fill="#555"/>
<path d="M680,232.5 L688.5,232.5 L695,239 L695,244.8 L686,244.8 L680,238.5 Z" fill="#8fd0ee" stroke="#2e9ad0" stroke-width="0.9"/>
<rect x="686" y="239" width="9" height="5.8" fill="#3a9ad0" />
<line x1="686" y1="239" x2="686" y2="244.8" stroke="#1e80b8" stroke-width="0.8" />
<path d="M682,234.5 L687.5,234.5 L691,238 L685,238 Z" fill="#e0f4fc" stroke="#5ab4de" stroke-width="0.8"/>
<path d="M693,225.5 L699.3,225.5 L699.3,235 L693,235" fill="none" stroke="#5a5a5a" stroke-width="1.3"/>
<path d="M684.5,231 L684.5,228 L688,228" fill="none" stroke="#333" stroke-width="1.4"/><path d="M687.5,225 L691,228 L687.5,231 Z" fill="#333"/>
<path d="M712.5,232 L717.5,225.5 L732,225.5 L732,237.5 L726,244.5 L712.5,244.5 Z" fill="#ffffff" stroke="#b0b0b0" stroke-width="1"/>
<path d="M712.5,232 L717.5,225.5 L732,225.5 L732,231 L726,238 L712.5,238 Z" fill="#b8e0f0" stroke="#8ac0d8" stroke-width="0.8"/>
<path d="M712.5,232 L726,232 L732,225.5 M726,232 L726,244.5" fill="none" stroke="#9ac8dc" stroke-width="0.8"/>
<g stroke="#3a3a3a" stroke-width="1.3"><line x1="745.5" y1="225" x2="745.5" y2="239"/><line x1="761.5" y1="225" x2="761.5" y2="240"/><line x1="747" y1="229.5" x2="760" y2="229.5"/></g>
<path d="M746,229.5 L749.5,227.5 L749.5,231.5 Z M761,229.5 L757.5,227.5 L757.5,231.5 Z" fill="#3a3a3a"/>
<text x="751" y="237.5" font-size="8.5" fill="#2a8ad0" font-weight="bold">1</text>
<circle cx="746" cy="241.5" r="1.8" fill="#fff" stroke="#999" stroke-width="0.8"/>
<path d="M752.6,242 Q758.5,235.2 764.4,242 Q758.5,248.8 752.6,242 Z" fill="#3a3a3a"/><circle cx="758.5" cy="242" r="1.4" fill="#ccc"/>
<path d="M768,247.5 L768,243.5 L764,247.5 Z" fill="#555"/>
<rect x="777.5" y="225.5" width="11.5" height="6.8" fill="#fdf6de" stroke="#a8a8a8" stroke-width="1"/>
<path d="M789,229.3 L797,229.3 L793,234" fill="none" stroke="#333" stroke-width="1.3"/><path d="M791,236.5 L790.5,231.5 L795.5,234 Z" fill="#333"/>
<path d="M785.3,242 Q791.5,235 797.7,242 Q791.5,249 785.3,242 Z" fill="#3a3a3a"/><circle cx="791.5" cy="242" r="1.5" fill="#ddd"/>
<g stroke="#3a3a3a" stroke-width="1.3"><line x1="813.5" y1="229.5" x2="819.5" y2="236"/><line x1="819.5" y1="236" x2="825.5" y2="236"/><line x1="819.5" y1="236" x2="813.5" y2="243"/></g>
<circle cx="813.5" cy="229.5" r="2.9" fill="#6aa85a"/><circle cx="825.5" cy="236" r="3" fill="#e86a6a"/><circle cx="813.5" cy="243.5" r="3" fill="#3a8ab8"/>
<rect x="13.5" y="654.5" width="25" height="25" fill="#dfe0e2" stroke="#b4b4b4" stroke-width="1"/>
<rect x="22.5" y="657.3" width="4" height="4" fill="#ffffff" stroke="#333" stroke-width="1.1"/>
<rect x="22.5" y="665" width="4" height="4" fill="#ffffff" stroke="#333" stroke-width="1.1"/>
<rect x="22.5" y="672.6" width="4" height="4" fill="#ffffff" stroke="#333" stroke-width="1.1"/>
<rect x="31.5" y="665" width="4" height="4" fill="#ffffff" stroke="#333" stroke-width="1.1"/>
<line x1="24.5" y1="661.3" x2="24.5" y2="665" stroke="#666" stroke-width="0.9" />
<line x1="24.5" y1="669" x2="24.5" y2="672.6" stroke="#666" stroke-width="0.9" />
<line x1="26.5" y1="667" x2="31.5" y2="667" stroke="#666" stroke-width="0.9" />
<defs><radialGradient id="glb" cx="0.4" cy="0.4" r="0.6"><stop offset="0" stop-color="#bfe6fa"/><stop offset="1" stop-color="#1e8ad0"/></radialGradient><linearGradient id="sq" x1="0" y1="0" x2="0" y2="1"><stop offset="0" stop-color="#ffffff"/><stop offset="1" stop-color="#c4dce8"/></linearGradient></defs>
<ellipse cx="56.3" cy="666.8" rx="13.2" ry="3.2" transform="rotate(-45 56.3 666.8)" fill="none" stroke="#3c3c3c" stroke-width="1.3"/>
<circle cx="56.3" cy="666.8" r="8.6" fill="url(#glb)"/>
<path d="M51,663 Q55,661 57,664 Q56,669 53,671 Q49,668 51,663 Z M59,661 Q63,662 63.5,666 Q61,669 59,666 Z" fill="#1f78c0" opacity="0.55"/>
<defs><clipPath id="ulh"><path d="M30,640 L82,640 L30,692 Z" transform="translate(0,-0.5)"/></clipPath></defs>
<g clip-path="url(#ulh)"><ellipse cx="56.3" cy="666.8" rx="13.2" ry="3.2" transform="rotate(-45 56.3 666.8)" fill="none" stroke="#3c3c3c" stroke-width="1.3"/></g>
<rect x="76.7" y="657.6" width="19" height="18.5" fill="url(#sq)" stroke="#1f6e94" stroke-width="1.5" rx="1.5"/>
<line x1="109.6" y1="654" x2="109.6" y2="680" stroke="#a8a8a8" stroke-width="1" />
<circle cx="119.7" cy="661.8" r="2.9" fill="#1a6590"/>
<line x1="452.5" y1="648" x2="452.5" y2="680" stroke="#b8b8b8" stroke-width="1" />
<line x1="501.7" y1="648" x2="501.7" y2="680" stroke="#b8b8b8" stroke-width="1" />
<line x1="557.3" y1="648" x2="557.3" y2="680" stroke="#b8b8b8" stroke-width="1" />
<rect x="504" y="650.5" width="50.5" height="29" fill="#fafafa" stroke="#c4c4c4" stroke-width="1"/>
<rect x="537.5" y="651" width="16.5" height="28" fill="#dcdcdc" />
<line x1="537.5" y1="651" x2="537.5" y2="679.5" stroke="#c8c8c8" stroke-width="1" />
<path d="M541.5,662.5 L550,662.5 L545.75,667.5 Z" fill="#aaa"/>
<defs><linearGradient id="bn" x1="0" y1="0" x2="0" y2="1"><stop offset="0" stop-color="#b4b4b4"/><stop offset="0.5" stop-color="#cdcdcd"/><stop offset="1" stop-color="#9a9a9a"/></linearGradient></defs>
<g fill="url(#bn)"><rect x="514.9" y="656.1" width="4.1" height="5"/><rect x="522.4" y="656.1" width="4.5" height="5"/><rect x="511.1" y="660.9" width="19.6" height="10.2" rx="1"/><rect x="511.1" y="670" width="5.9" height="4.7"/><rect x="524.9" y="670" width="5.8" height="4.7"/></g>
<rect x="518.5" y="661" width="3.5" height="10" fill="#8e8e8e" />
<rect x="684.5" y="652" width="228" height="26" fill="#f7f7f7" stroke="#b4b4b4" stroke-width="1"/>
<line x1="893.7" y1="652" x2="893.7" y2="678" stroke="#c4c4c4" stroke-width="1" />
<path d="M898.5,662.5 L907.5,662.5 L903,668 Z" fill="#555"/>
<g stroke="#c4c4c4" stroke-width="1.6"><line x1="917" y1="681" x2="929" y2="668"/><line x1="922" y1="681" x2="929" y2="673"/><line x1="927" y1="681" x2="929" y2="679"/></g>
<path d="M1128,15 L1135,22 M1135,15 L1128,22" stroke="#707070" stroke-width="2.8"/>
<rect x="966.5" y="579.5" width="71" height="29" fill="#e4e5e7" stroke="#cfcfcf" stroke-width="1"/>
<line x1="940" y1="631.5" x2="1149" y2="631.5" stroke="#c6c6c6" stroke-width="1" />
<rect x="1067.5" y="644.5" width="69" height="29" fill="#f7f7f7" stroke="#a9a9a9" stroke-width="1"/>
<line x1="1149.5" y1="36" x2="1149.5" y2="690" stroke="#c0c0c0" stroke-width="1.5" />
<line x1="940" y1="688.5" x2="1151" y2="688.5" stroke="#c0c0c0" stroke-width="2" />
<text x="380.6" y="26.2" font-size="16.8" fill="#adb1b5" textLength="251.6" lengthAdjust="spacingAndGlyphs" stroke="#e3e3e3" stroke-width="0.22" >PRT0003 (Actif) - Creo Parametric</text>
<text x="38.2" y="62.8" font-size="18" fill="#ffffff" textLength="48.3" lengthAdjust="spacingAndGlyphs" stroke="#676767" stroke-width="0.35" >Fichier</text>
<text x="119.7" y="62.8" font-size="18" fill="#2e2e2e" textLength="57.6" lengthAdjust="spacingAndGlyphs" stroke="#cfd2d5" stroke-width="0.35" >Modèle</text>
<text x="178.7" y="62.8" font-size="18" fill="#2e2e2e" textLength="59.3" lengthAdjust="spacingAndGlyphs" stroke="#cfd2d5" stroke-width="0.35" >Analyse</text>
<text x="261.1" y="62.8" font-size="18" fill="#2e2e2e" textLength="87.3" lengthAdjust="spacingAndGlyphs" stroke="#cfd2d5" stroke-width="0.35" >Annotation</text>
<text x="373" y="62.8" font-size="18" fill="#2e2e2e" textLength="45" lengthAdjust="spacingAndGlyphs" stroke="#cfd2d5" stroke-width="0.35" >Outils</text>
<text x="418.6" y="62.8" font-size="18" fill="#2e2e2e" textLength="74.3" lengthAdjust="spacingAndGlyphs" stroke="#cfd2d5" stroke-width="0.35" >Affichage</text>
<text x="518" y="62.8" font-size="18" fill="#2e2e2e" textLength="97.4" lengthAdjust="spacingAndGlyphs" stroke="#cfd2d5" stroke-width="0.35" >Applications</text>
<text x="642.1" y="62.8" font-size="18" fill="#1a1a1a" textLength="85.4" lengthAdjust="spacingAndGlyphs" stroke="#f7f7f7" stroke-width="0.35" >TellWATCH</text>
<text x="739.9" y="62.8" font-size="18" fill="#2e2e2e" textLength="61.7" lengthAdjust="spacingAndGlyphs" stroke="#a6dcf8" stroke-width="0.35" font-style="italic">Esquisse</text>
<text x="20.3" y="148" font-size="14.5" fill="#a9a9a9" textLength="62.9" lengthAdjust="spacingAndGlyphs" stroke="#f7f7f7" stroke-width="0.22" >Démarrer</text>
<text x="14.2" y="167.4" font-size="14.5" fill="#a9a9a9" textLength="74.4" lengthAdjust="spacingAndGlyphs" stroke="#f7f7f7" stroke-width="0.22" >TellWATCH</text>
<text x="115.6" y="148" font-size="14.5" fill="#141414" textLength="45.3" lengthAdjust="spacingAndGlyphs" stroke="#f7f7f7" stroke-width="0.22" >Arrêter</text>
<text x="100.8" y="167.4" font-size="14.5" fill="#141414" textLength="73.6" lengthAdjust="spacingAndGlyphs" stroke="#f7f7f7" stroke-width="0.22" >TellWATCH</text>
<text x="58.8" y="199.8" font-size="14.5" fill="#2e2e2e" textLength="73.5" lengthAdjust="spacingAndGlyphs" stroke="#eeeff1" stroke-width="0.22" >Démarrage</text>
<text x="205.4" y="148" font-size="14.5" fill="#141414" textLength="48.6" lengthAdjust="spacingAndGlyphs" stroke="#f7f7f7" stroke-width="0.22" >Creo -&gt;</text>
<text x="193.2" y="167.4" font-size="14.5" fill="#141414" textLength="74.4" lengthAdjust="spacingAndGlyphs" stroke="#f7f7f7" stroke-width="0.22" >TellWATCH</text>
<text x="279.4" y="148" font-size="14.5" fill="#a9a9a9" textLength="74" lengthAdjust="spacingAndGlyphs" stroke="#f7f7f7" stroke-width="0.22" >TellWATCH</text>
<text x="291.6" y="167.4" font-size="14.5" fill="#a9a9a9" textLength="49.7" lengthAdjust="spacingAndGlyphs" stroke="#f7f7f7" stroke-width="0.22" >-&gt; Creo</text>
<text x="365.6" y="96.5" font-size="14.5" fill="#a9a9a9" textLength="154.8" lengthAdjust="spacingAndGlyphs" stroke="#f7f7f7" stroke-width="0.22" >Création composant (1)</text>
<path d="M530,87.7 L538.6,87.7 L534.3,93.4 Z" fill="#b8b8b8"/>
<text x="365.6" y="130.4" font-size="14.5" fill="#a9a9a9" textLength="154.8" lengthAdjust="spacingAndGlyphs" stroke="#f7f7f7" stroke-width="0.22" >Création composant (2)</text>
<path d="M530,121.60000000000001 L538.6,121.60000000000001 L534.3,127.30000000000001 Z" fill="#b8b8b8"/>
<text x="365.6" y="164.5" font-size="14.5" fill="#a9a9a9" textLength="154.8" lengthAdjust="spacingAndGlyphs" stroke="#f7f7f7" stroke-width="0.22" >Création composant (3)</text>
<path d="M530,155.7 L538.6,155.7 L534.3,161.4 Z" fill="#b8b8b8"/>
<text x="548.6" y="96.5" font-size="14.5" fill="#141414" textLength="36.6" lengthAdjust="spacingAndGlyphs" stroke="#f7f7f7" stroke-width="0.22" >Outils</text>
<path d="M595,87.7 L603.4,87.7 L599.2,93.4 Z" fill="#333"/>
<text x="645" y="148" font-size="14.5" fill="#a9a9a9" textLength="49.6" lengthAdjust="spacingAndGlyphs" stroke="#f7f7f7" stroke-width="0.22" >Manuel</text>
<text x="613" y="167.4" font-size="14.5" fill="#a9a9a9" textLength="112" lengthAdjust="spacingAndGlyphs" stroke="#f7f7f7" stroke-width="0.22" >TellWATCH/Creo</text>
<text x="429" y="199.8" font-size="14.5" fill="#2e2e2e" textLength="62" lengthAdjust="spacingAndGlyphs" stroke="#eeeff1" stroke-width="0.22" >Fonctions</text>
<text x="44.5" y="234" font-size="15" fill="#2e2e2e" textLength="112.5" lengthAdjust="spacingAndGlyphs" stroke="#eeeff1" stroke-width="0.22" >Arbre du modèle</text>
<text x="41.5" y="270" font-size="15" fill="#2e2e2e" textLength="117.5" lengthAdjust="spacingAndGlyphs" stroke="#eeeff1" stroke-width="0.22" font-weight="bold">Arbre du modèle</text>
<text x="971.6" y="24.9" font-size="16" fill="#141414" textLength="144.4" lengthAdjust="spacingAndGlyphs" stroke="#dcdfe2" stroke-width="0.22" >Eléments sélectionnés</text>
<text x="974.5" y="64.8" font-size="14" fill="#2e2e2e" textLength="71" lengthAdjust="spacingAndGlyphs" stroke="#ffffff" stroke-width="0.22" >Arc ID =41</text>
<text x="974.5" y="86.8" font-size="14" fill="#2e2e2e" textLength="71" lengthAdjust="spacingAndGlyphs" stroke="#ffffff" stroke-width="0.22" >Arc ID =42</text>
<text x="974.5" y="108.8" font-size="14" fill="#2e2e2e" textLength="71" lengthAdjust="spacingAndGlyphs" stroke="#ffffff" stroke-width="0.22" >Arc ID =43</text>
<text x="974.5" y="130.8" font-size="14" fill="#2e2e2e" textLength="71" lengthAdjust="spacingAndGlyphs" stroke="#ffffff" stroke-width="0.22" >Arc ID =44</text>
<text x="974.5" y="152.8" font-size="14" fill="#2e2e2e" textLength="71" lengthAdjust="spacingAndGlyphs" stroke="#ffffff" stroke-width="0.22" >Arc ID =45</text>
<text x="974.5" y="174.8" font-size="14" fill="#2e2e2e" textLength="71" lengthAdjust="spacingAndGlyphs" stroke="#ffffff" stroke-width="0.22" >Arc ID =46</text>
<text x="974.5" y="196.8" font-size="14" fill="#2e2e2e" textLength="71" lengthAdjust="spacingAndGlyphs" stroke="#ffffff" stroke-width="0.22" >Arc ID =47</text>
<text x="974.5" y="218.8" font-size="14" fill="#2e2e2e" textLength="71" lengthAdjust="spacingAndGlyphs" stroke="#ffffff" stroke-width="0.22" >Arc ID =48</text>
<text x="974.5" y="240.8" font-size="14" fill="#2e2e2e" textLength="71" lengthAdjust="spacingAndGlyphs" stroke="#ffffff" stroke-width="0.22" >Arc ID =49</text>
<text x="977.5" y="599.5" font-size="14" fill="#a8a8a8" textLength="48.5" lengthAdjust="spacingAndGlyphs" stroke="#e4e5e7" stroke-width="0.22" >Enlever</text>
<text x="1078.5" y="665" font-size="14" fill="#141414" textLength="46.5" lengthAdjust="spacingAndGlyphs" stroke="#f7f7f7" stroke-width="0.22" >Fermer</text>
<text x="129" y="668" font-size="14" fill="#2e2e2e" textLength="291" lengthAdjust="spacingAndGlyphs" stroke="#eeeff1" stroke-width="0.22" >Lorsqu'une restriction est active, cliquez sur le bou</text>
<text x="562.5" y="671" font-size="14" fill="#2e2e2e" textLength="101.8" lengthAdjust="spacingAndGlyphs" stroke="#eeeff1" stroke-width="0.22" >9 sélectionné(s)</text>
<text x="693" y="671" font-size="14" fill="#2e2e2e" textLength="31" lengthAdjust="spacingAndGlyphs" stroke="#f7f7f7" stroke-width="0.22" >Tous</text></svg></body></html>
